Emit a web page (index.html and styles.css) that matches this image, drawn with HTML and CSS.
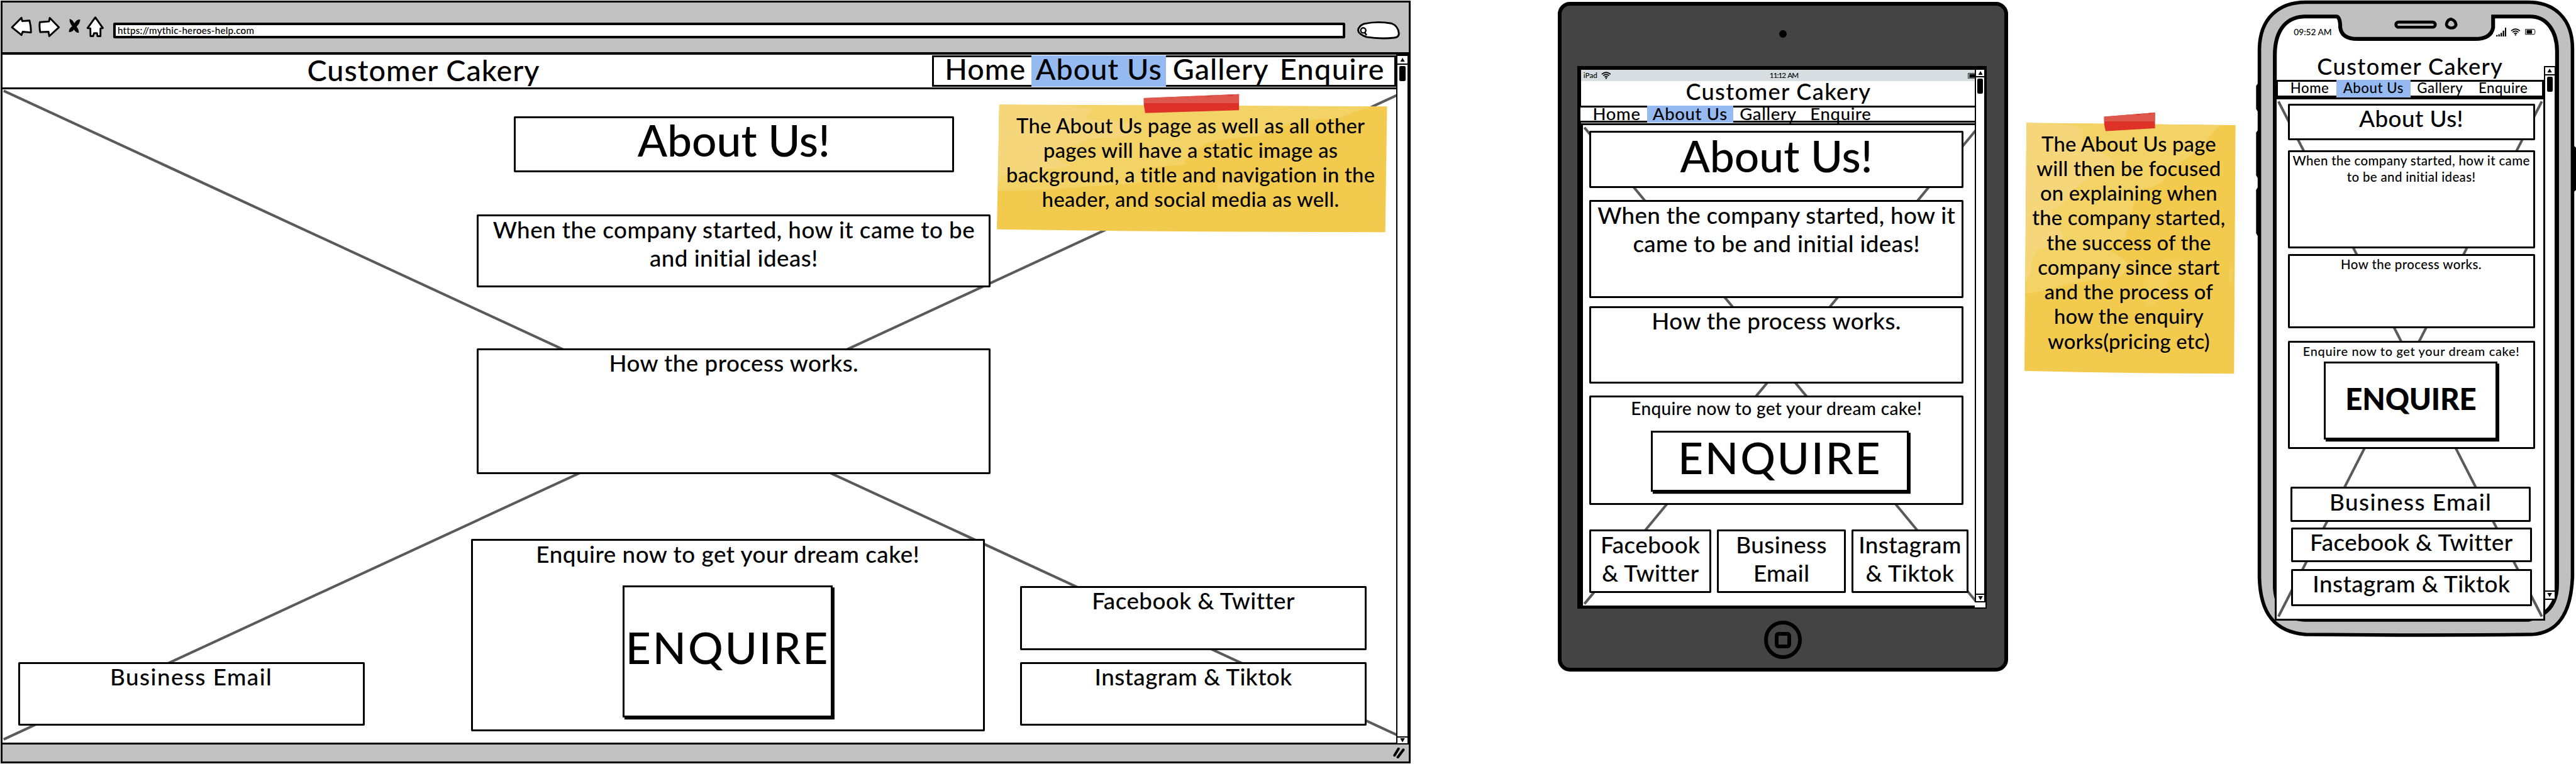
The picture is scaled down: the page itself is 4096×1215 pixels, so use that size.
FILE: index.html
```html
<!DOCTYPE html>
<html lang="en">
<head>
<meta charset="utf-8">
<title>Customer Cakery – About Us wireframes</title>
<link rel="stylesheet" href="styles.css">
</head>
<body>
<svg width="0" height="0" class="defs">
  <symbol id="wifi" viewBox="0 0 26 20"><g fill="none" stroke="#000" stroke-width="3"><path d="M1 7Q13-3 25 7"/><path d="M5 11Q13 4 21 11"/><path d="M9 15Q13 11 17 15"/></g><circle cx="13" cy="18" r="2"/></symbol>
  <symbol id="up" viewBox="0 0 14 12"><path d="M7 0L14 12H0Z"/></symbol>
  <symbol id="down" viewBox="0 0 14 12"><path d="M0 0H14L7 12Z"/></symbol>
</svg>
<div class="board">

  <section class="browser">
    <div class="chrome">
      <svg class="tools" viewBox="28 40 260 65"><g fill="#fff" stroke="#000" stroke-width="5" stroke-linejoin="round"><path d="M33 75L59 49L61 58L81 56.7Q85 72 85 89L62.4 87L59 96Z"/><path d="M109 61L134 59L136 49.500L161 75L134.700 99L132.500 87L110 88Q107 72 109 61Z"/><path d="M260 48L280.500 77L274 78L274 99H266L264.600 91H256.600L254 99H247L246.500 78L239 77Z"/></g><path d="M190 52Q198 54 203 64Q210 52 219 54Q218 65 209 73Q216 82 215 90Q207 90 202 81Q198 88 188 88Q188 78 197 72Q189 62 190 52Z"/></svg>
      <div class="url">https://mythic-heroes-help.com</div>
      <svg class="search" viewBox="3693 54 124 56"><path d="M3715 64Q3752 56 3790 63Q3808 70 3810 90Q3810 101 3797 102Q3760 106 3722 100Q3700 92 3699 82Q3700 70 3715 64Z" fill="#fff" stroke="#000" stroke-width="5"/><ellipse cx="3713" cy="82" rx="7" ry="7" fill="none" stroke="#000" stroke-width="4"/><path d="M3717 88L3722 95" stroke="#000" stroke-width="4.5"/></svg>
    </div>
    <div class="viewport">
      <div class="page">
        <header class="head">
          <h1 class="logo">Customer Cakery</h1>
          <nav class="nav"><a>Home</a><a class="on">About Us</a><a>Gallery</a><a>Enquire</a></nav>
        </header>
        <main class="image">
          <svg class="cross" viewBox="7 244 3793 1778" preserveAspectRatio="none"><path d="M10 248L3830 2015M10 2014L3830 247"/></svg>
          <div class="col left"><div class="box text email">Business Email</div></div>
          <div class="col center">
            <div class="box hero">About Us!</div>
            <div class="box text story">When the company started, how it came to be<br>and initial ideas!</div>
            <div class="box text process">How the process works.</div>
            <div class="box text cta">Enquire now to get your dream cake!<button class="btn">ENQUIRE</button></div>
          </div>
          <div class="col right"><div class="box text">Facebook &amp; Twitter</div><div class="box text">Instagram &amp; Tiktok</div></div>
        </main>
      </div>
      <div class="scroll"><i class="cap"><svg><use href="#up"/></svg></i><i class="thumb"></i><i class="cap end"><svg><use href="#down"/></svg></i></div>
    </div>
    <div class="status"><svg viewBox="0 0 34 28"><path d="M4 21L15 3M13 26L28 6" stroke="#000" stroke-width="7" stroke-linecap="round"/></svg></div>
  </section>

  <aside class="note note-a">
    <svg viewBox="2705 250 1075 390"><path d="M2718.600 285L3773.800 290L3769 632Q3240 632 2712 624.500Z" fill="#f2ca4d"/><path d="M2718.600 285L3735 290Q3680 306 3640 322Q3560 324 3500 340Q3440 360 3425 372Q3300 376 3270 398Q3240 420 3222 440L3226 448Q3120 455 3100 462L3130 472Q3220 472 3212 484Q3100 500 2960 508Q2830 520 2715 520Z" fill="#f3d266"/><path d="M2718.600 285L2870 287Q2960 292 2970 300Q2945 320 2960 326Q3110 330 3108 345Q3090 375 3010 375Q2935 378 2935 395Q2850 405 2845 418L2915 452Q2850 460 2725 478L2716 500Z" fill="#f5d67a"/><path d="M3312 498Q3350 490 3420 500Q3450 510 3390 525Q3350 535 3330 530Q3306 518 3312 498Z" fill="#f3ce5b"/><path d="M3111.800 267L3371 256.600V300L3115.600 307.700L3111.800 285Z" fill="#de3127"/><path d="M3111.800 267L3371 256.600V281H3111.800Z" fill="#df564c"/><path d="M3277 263Q3290 266 3300 261ZM3338 259Q3350 264 3356 258Z" fill="#de3127"/></svg>
    <p>The About Us page as well as all other<br>pages will have a static image as<br>background, a title and navigation in the<br>header, and social media as well.</p>
  </aside>

  <section class="tablet">
    <div class="bezel-top"><i class="camera"></i></div>
    <div class="screen">
      <div class="page">
        <div class="statusbar"><span>iPad</span><svg class="wifi"><use href="#wifi"/></svg><span class="time">11:12 AM</span><svg class="batt" viewBox="0 0 20 16"><path d="M20 1H1V15H20" fill="none" stroke="#000" stroke-width="1.500"/><path d="M4 3H20V13H4Z"/></svg></div>
        <h1 class="logo">Customer Cakery</h1>
        <nav class="nav"><a>Home</a><a class="on">About Us</a><a>Gallery</a><a>Enquire</a></nav>
        <main class="image">
          <svg class="cross" viewBox="4306 337.500 1069 1309" preserveAspectRatio="none"><path d="M4310 344L5384 1642M4310 1642L5384 344"/></svg>
          <div class="box hero">About Us!</div>
          <div class="box text story">When the company started, how it<br>came to be and initial ideas!</div>
          <div class="box text process">How the process works.</div>
          <div class="box text cta">Enquire now to get your dream cake!<button class="btn">ENQUIRE</button></div>
          <div class="links"><div class="box text">Facebook<br>&amp; Twitter</div><div class="box text">Business<br>Email</div><div class="box text">Instagram<br>&amp; Tiktok</div></div>
        </main>
      </div>
      <div class="scroll"><i class="cap"><svg><use href="#up"/></svg></i><i class="thumb"></i><i class="cap end"><svg><use href="#down"/></svg></i></div>
    </div>
    <div class="bezel-bottom"><i class="homebtn"><i></i></i></div>
  </section>

  <aside class="note note-b">
    <svg viewBox="5500 300 590 725"><path d="M5514 335L6083 341L6079 1017.600Q5790 1017 5508.500 1010Z" fill="#f2ca4d"/><path d="M5514 335L6045 341Q6018 360 6005 385Q5960 430 5940 437Q5895 465 5885 495Q5860 512 5832 514Q5800 545 5800 600Q5785 630 5782 650Q5760 662 5720 668L5770 700Q5795 715 5790 735L5765 755Q5700 762 5620 775Q5560 795 5511 800Z" fill="#f3d266"/><path d="M5514 335L5600 338Q5660 342 5668 352Q5660 395 5690 410Q5752 425 5752 445Q5740 460 5690 462Q5690 490 5640 515Q5630 555 5582 572L5615 645Q5600 670 5545 680Q5520 710 5530 730L5512 770Z" fill="#f5d67a"/><path d="M5883 710Q5925 700 5950 720L5960 735Q5905 750 5900 760Q5885 810 5860 830Q5838 845 5833 805Q5828 770 5845 750L5885 735ZM6076 715Q6060 745 6066 770Q6074 785 6076 740Z" fill="#f3ce5b"/><path d="M5725.400 317.800L5863.800 307V349.700L5729.500 357.300L5725.400 338Z" fill="#de3127"/><path d="M5725.400 317.800L5863.800 307V331H5725.400Z" fill="#df564c"/><path d="M5812 312Q5820 317 5825 311ZM5844 309Q5850 314 5854 308Z" fill="#de3127"/></svg>
    <p>The About Us page<br>will then be focused<br>on explaining when<br>the company started,<br>the success of the<br>company since start<br>and the process of<br>how the enquiry<br>works(pricing etc)</p>
  </aside>

  <section class="phone">
    <svg class="frame" viewBox="6135 0 875 1735"><path d="M6150 228H6143L6139 234V296L6143 303H6150ZM6150 355H6143L6139 361V477L6143 484H6150ZM6150 511H6143L6139 517V635L6143 642H6150ZM6998 396H7003L7010 402V517L7003 523H6996Z"/><path d="M6274 6H6880C6950 6 7000 50 7000 132C6998 600 7002 1100 7000 1570C6996 1670 6960 1727 6880 1727Q6600 1730 6274 1727C6190 1720 6150 1670 6148 1570V132C6150 50 6200 6 6274 6Z" fill="#c0c0c0" stroke="#000" stroke-width="9.500"/><path d="M6357 45H6270C6215 47 6190 90 6190 150V1600Q6196 1687 6275 1687H6880Q6958 1670 6958 1590V140C6958 85 6930 45 6885 45H6784V75Q6778 106 6735 106H6415Q6372 106 6368 75Q6368 45 6357 45Z" fill="#fff" stroke="#000" stroke-width="10.500"/><rect x="6519.500" y="60" width="107" height="14" rx="7" fill="none" stroke="#000" stroke-width="8"/><path d="M6670 52Q6682 56 6683 68Q6680 77 6668 76Q6657 74 6657 66Q6660 52 6670 52Z" fill="none" stroke="#000" stroke-width="8"/></svg>
    <div class="statusbar"><span>09:52 AM</span><svg class="signal" viewBox="0 0 28 24"><path d="M0 20H4V24H0ZM6 18H10V24H6ZM12 14H16V24H12ZM18 8H22V24H18ZM24 0H28V24H24Z"/></svg><svg class="wifi"><use href="#wifi"/></svg><svg class="batt" viewBox="0 0 28 16"><path d="M1 1H25L27 5V11L25 15H1Z" fill="none" stroke="#000" stroke-width="1.600"/><path d="M4 3H19V13H4Z"/></svg></div>
    <div class="viewport">
      <div class="page">
        <h1 class="logo">Customer Cakery</h1>
        <nav class="nav"><a>Home</a><a class="on">About Us</a><a>Gallery</a><a>Enquire</a></nav>
        <main class="image">
          <svg class="cross" viewBox="6195.500 270.500 727 1414" preserveAspectRatio="none"><path d="M6200.400 276L6919 1679.500M6200.400 1679.500L6919 276"/></svg>
          <div class="box text hero">About Us!</div>
          <div class="box text story">When the company started, how it came<br>to be and initial ideas!</div>
          <div class="box text process">How the process works.</div>
          <div class="box text cta">Enquire now to get your dream cake!<button class="btn">ENQUIRE</button></div>
          <div class="box text link email">Business Email</div>
          <div class="box text link">Facebook &amp; Twitter</div>
          <div class="box text link">Instagram &amp; Tiktok</div>
        </main>
      </div>
      <div class="scroll"><i class="cap"><svg><use href="#up"/></svg></i><i class="thumb"></i><i class="cap end"><svg><use href="#down"/></svg></i></div>
    </div>
  </section>
</div>
</body>
</html>
```
FILE: styles.css
```css
/* The board is 70.1rem wide: 1rem is 100 units of the drawing. */
html { font-size: calc(100vw / 70.1); }
* { box-sizing: border-box; }
body { margin: 0; background: #fff; color: #000; font-family: Lato, "Open Sans", sans-serif; font-weight: 500; }
.defs { position: absolute; }
.board { position: relative; width: 100vw; height: 100vh; overflow: hidden; }
svg { display: block; flex: none; }
i { display: block; }
h1, p { margin: 0; font-weight: 500; }

/* shared parts */
.page { flex: 1; min-width: 0; display: flex; flex-direction: column; }
.logo { text-align: center; white-space: nowrap; line-height: 1; }
.nav { display: flex; background: #fff; border: .055rem solid #000; letter-spacing: .021em; white-space: nowrap; }
.nav a { display: flex; align-items: center; line-height: 1; margin: -.055rem 0; }
.nav .on { justify-content: center; background: #94baf1; position: relative; }
.image { position: relative; background: #fff; }
.cross { position: absolute; left: 0; top: 0; width: 100%; height: 100%; }
.cross path { stroke: #5a5a5a; stroke-width: 7; fill: none; }
.box { position: relative; background: #fff; border: .053rem solid #000; border-radius: .03rem; text-align: center; white-space: nowrap; flex: none; }
.hero { font-size: 1.19rem; line-height: .9; padding-top: .05rem; }
.text { font-size: .63rem; line-height: 1.222; letter-spacing: .012em; }
.text::before { content: ""; display: block; margin-top: -.05em; }
.btn { display: flex; align-items: center; justify-content: center; padding: 0; background: #fff; color: #000; border: .053rem solid #000; border-radius: 0; box-shadow: .05rem .055rem 0 #000; font: 500 1.19rem/1 Lato, sans-serif; letter-spacing: .042em; }
.scroll { position: relative; flex: none; display: flex; flex-direction: column; align-items: center; background: #fff; border: .035rem solid #000; }
.cap { align-self: stretch; display: flex; align-items: center; justify-content: center; border-bottom: .035rem solid #000; flex: none; }
.cap svg { width: .14rem; height: .11rem; }
.cap.end { margin-top: auto; border-bottom: 0; border-top: .035rem solid #000; }
.thumb { width: .16rem; height: .41rem; margin-top: .04rem; background: #000; border-radius: .04rem; }

/* desktop browser */
.browser { position: absolute; left: .02rem; top: .01rem; width: 38.36rem; height: 20.77rem; border: .053rem solid #000; display: flex; flex-direction: column; background: #fff; }
.chrome { display: flex; align-items: flex-start; height: 1.43rem; background: #c1c1c1; border-bottom: .07rem solid #000; padding: .34rem .19rem 0 .21rem; flex: none; }
.tools { width: 2.6rem; height: .65rem; }
.url { flex: 1; height: .43rem; margin: .21rem .29rem 0 .2rem; background: #fff; border: .07rem solid #000; border-radius: .04rem; font-size: .26rem; line-height: .28rem; padding-left: .05rem; letter-spacing: .015em; }
.search { width: 1.24rem; height: .56rem; margin-top: .14rem; }
.browser .viewport { display: flex; height: 18.77rem; flex: none; }
.head { display: flex; justify-content: space-between; height: .895rem; flex: none; }
.browser .logo { font-size: .8rem; letter-spacing: .021em; padding: .02rem 0 0 8.29rem; line-height: .8rem; }
.browser .nav { width: 12.63rem; height: .86rem; margin-top: .015rem; font-size: .8rem; }
.browser .nav a { padding-bottom: .13rem; }
.browser .nav a:nth-child(1) { width: 2.65rem; padding-left: .29rem; }
.browser .nav a:nth-child(2) { width: 3.665rem; }
.browser .nav a:nth-child(3) { width: 2.96rem; padding-left: .18rem; }
.browser .nav a:nth-child(4) { padding-left: .13rem; letter-spacing: .03em; }
.browser .image { flex: 1; display: flex; border-top: .055rem solid #000; border-bottom: .055rem solid #000; }
.col { display: flex; flex-direction: column; }
.left { width: 12.745rem; padding: 0 0 .46rem .42rem; justify-content: flex-end; }
.email { letter-spacing: .04em; }
.left .box { width: 9.43rem; height: 1.735rem; }
.center { width: 14.15rem; padding-top: .726rem; }
.center .hero { width: 11.98rem; height: 1.534rem; margin-left: 1.164rem; }
.center .story { width: 13.98rem; height: 1.98rem; margin: 1.146rem 0 0 .164rem; }
.center .process { width: 13.98rem; height: 3.42rem; margin: 1.655rem 0 0 .164rem; }
.center .cta { width: 13.98rem; height: 5.234rem; margin-top: 1.776rem; letter-spacing: .014em; }
.center .btn { width: 5.71rem; height: 3.59rem; margin: .466rem auto 0 4.08rem; padding-bottom: .2rem; }
.right { padding: 0 0 .46rem .8rem; justify-content: flex-end; gap: .325rem; }
.right .box { width: 9.42rem; height: 1.735rem; }
.browser .scroll { width: .33rem; }
.browser .cap { height: .23rem; }
.browser .cap.end { height: .19rem; }
.status { flex: 1; background: #c1c1c1; display: flex; justify-content: flex-end; align-items: center; padding-right: .08rem; }
.status svg { width: .34rem; height: .28rem; }

/* sticky notes */
.note { position: absolute; font-size: .56rem; line-height: .671rem; text-align: center; white-space: nowrap; letter-spacing: .01em; }
.note svg { position: absolute; inset: 0; width: 100%; height: 100%; }
.note p { position: relative; }
.note-a { left: 27.05rem; top: 2.5rem; width: 10.75rem; height: 3.9rem; padding: .575rem .05rem 0 0; letter-spacing: .008em; }
.note-b { left: 55rem; top: 3rem; width: 5.9rem; height: 7.25rem; padding: .575rem .04rem 0 0; letter-spacing: .006em; }

/* tablet */
.tablet { position: absolute; left: 42.4rem; top: .057rem; width: 12.24rem; height: 18.22rem; background: #444; border: .103rem solid #000; border-radius: .33rem; }
.bezel-top { height: 1.64rem; padding-top: .655rem; }
.camera { width: .22rem; height: .22rem; border-radius: 50%; background: #000; margin: 0 auto; }
.screen { display: flex; width: 11.14rem; height: 14.76rem; margin-left: .425rem; background: #fff; border: solid #000; border-width: .103rem .035rem .04rem .103rem; }
.statusbar { display: flex; align-items: center; font-size: .2rem; line-height: 1; flex: none; }
.tablet .statusbar { height: .31rem; background: #d6dee1; padding-left: .06rem; position: relative; }
.tablet .wifi { width: .27rem; height: .2rem; margin-left: .1rem; }
.time { margin-left: 4.32rem; letter-spacing: -.08em; word-spacing: .12em; }
.tablet .batt { width: .2rem; height: .16rem; margin-left: auto; }
.tablet .logo { font-size: .62rem; letter-spacing: .036em; height: .67rem; line-height: .58rem; padding-left: .02rem; }
.tablet .nav { height: .455rem; margin-left: -.07rem; border-right: 0; font-size: .47rem; letter-spacing: .025em; position: relative; flex: none; }
.tablet .nav a { padding-bottom: .05rem; }
.tablet .nav a:nth-child(1) { width: 1.81rem; padding-left: .33rem; }
.tablet .nav a:nth-child(2) { width: 2.34rem; }
.tablet .nav a:nth-child(3) { width: 1.93rem; padding-left: .18rem; }
.tablet .nav a:nth-child(4) { padding-left: .17rem; }
.tablet .image { flex: 1; margin-top: .01rem; border: .053rem solid #000; border-right: 0; padding: .17rem 0 0 .17rem; }
.tablet .box { width: 10.18rem; }
.tablet .hero { height: 1.546rem; padding-top: .08rem; }
.tablet .story { height: 2.67rem; margin-top: .334rem; letter-spacing: .008em; }
.tablet .process { height: 2.107rem; margin-top: .21rem; }
.tablet .text::before { margin-top: -.03em; }
.tablet .cta { height: 2.965rem; margin-top: .338rem; font-size: .48rem; }
.tablet .cta::before { margin-top: -.01em; }
.tablet .btn { width: 7.01rem; height: 1.67rem; margin: .31rem 0 0 1.63rem; padding-bottom: .2rem; }
.links { display: flex; gap: .155rem; margin-top: .676rem; }
.links .box { height: 1.724rem; width: 3.5rem; }
.links .box:first-child { width: 3.323rem; }
.links .box:last-child { width: 3.183rem; }
.tablet .scroll { width: .29rem; height: 14.5rem; border-top: 0; }
.tablet .cap { height: .2rem; }
.tablet .cap.end { height: .21rem; }
.homebtn { width: 1.04rem; height: 1.04rem; margin: .34rem auto 0; border: .103rem solid #000; border-radius: 50%; display: flex; align-items: center; justify-content: center; }
.homebtn i { width: .43rem; height: .44rem; border: .103rem solid #000; border-radius: .1rem; }

/* phone */
.phone { position: absolute; left: 61.35rem; top: 0; width: 8.75rem; height: 17.35rem; }
.frame { position: absolute; inset: 0; width: 100%; height: 100%; }
.phone .statusbar { position: relative; height: 1.25rem; padding: .5rem 1.1rem 0 1.07rem; font-size: .235rem; }
.signal { width: .28rem; height: .24rem; margin-left: auto; }
.phone .wifi { width: .27rem; height: .2rem; margin-left: .12rem; }
.phone .batt { width: .28rem; height: .16rem; margin-left: .13rem; }
.phone .viewport { position: relative; display: flex; align-items: flex-start; padding-left: .56rem; }
.phone .page { flex: none; width: 7.355rem; position: relative; z-index: 1; }
.phone .logo { font-size: .62rem; letter-spacing: .038em; height: .93rem; line-height: 1.11rem; }
.phone .nav { height: .47rem; margin: 0 .035rem; font-size: .38rem; letter-spacing: .025em; }
.phone .nav a { padding-bottom: .03rem; }
.phone .nav a:nth-child(1) { width: 1.58rem; padding-left: .33rem; }
.phone .nav a:nth-child(2) { width: 2.02rem; }
.phone .nav a:nth-child(3) { width: 1.65rem; padding-left: .18rem; }
.phone .nav a:nth-child(4) { padding-left: .2rem; }
.phone .image { height: 14.23rem; margin-top: .01rem; border: .053rem solid #000; padding: .115rem 0 0 .293rem; }
.phone .box { width: 6.726rem; }
.phone .hero { height: .986rem; font-size: .63rem; line-height: 1.222; padding: 0; }
.phone .story { height: 2.673rem; margin-top: .281rem; font-size: .35rem; line-height: 1.245; letter-spacing: .018em; }
.phone .process { height: 2.015rem; margin-top: .15rem; font-size: .35rem; line-height: 1.245; letter-spacing: .02em; }
.phone .cta { height: 2.95rem; margin-top: .345rem; font-size: .34rem; line-height: 1.245; letter-spacing: .036em; }
.phone .story::before, .phone .process::before, .phone .cta::before { margin-top: 0; padding-top: .02rem; }
.phone .btn { width: 4.72rem; height: 2.12rem; margin: .073rem 0 0 .94rem; padding-bottom: .13rem; font-size: .81rem; font-weight: 900; letter-spacing: -.005em; }
.phone .link { width: 6.547rem; height: .95rem; margin: .15rem 0 0 .095rem; }
.phone .link.email { margin: 1.03rem 0 0 .075rem; }
.phone .link:last-child { height: 1.02rem; margin-top: .18rem; }
.phone .scroll { width: .33rem; height: 14.53rem; margin: .547rem 0 0 -.045rem; }
.phone .cap { height: .22rem; }
.phone .cap.end { height: .22rem; }
```
